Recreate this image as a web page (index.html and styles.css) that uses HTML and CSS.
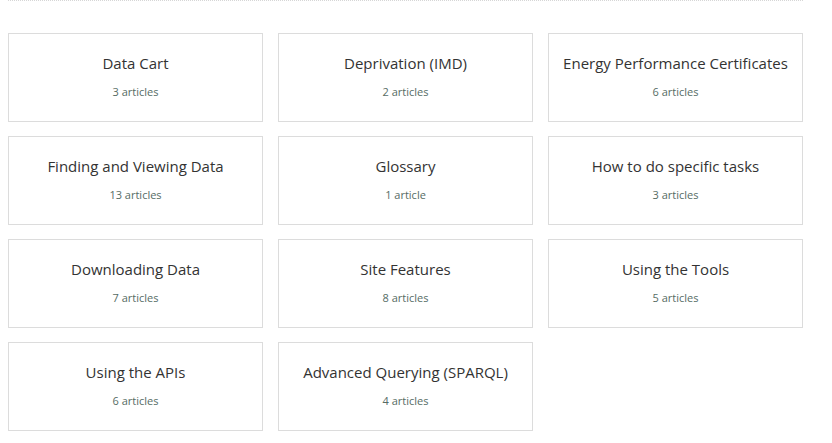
FILE: index.html
```html
<!DOCTYPE html>
<html>
<head>
<meta charset="utf-8">
<link rel="stylesheet" href="styles.css">
</head>
<body>
<div class="page">
  <div class="divider"></div>
  <div class="grid">
    <a class="card" href="#"><span class="title">Data Cart</span><span class="count">3 articles</span></a>
    <a class="card" href="#"><span class="title">Deprivation (IMD)</span><span class="count">2 articles</span></a>
    <a class="card" href="#"><span class="title">Energy Performance Certificates</span><span class="count">6 articles</span></a>
    <a class="card" href="#"><span class="title">Finding and Viewing Data</span><span class="count">13 articles</span></a>
    <a class="card" href="#"><span class="title">Glossary</span><span class="count">1 article</span></a>
    <a class="card" href="#"><span class="title">How to do specific tasks</span><span class="count">3 articles</span></a>
    <a class="card" href="#"><span class="title">Downloading Data</span><span class="count">7 articles</span></a>
    <a class="card" href="#"><span class="title">Site Features</span><span class="count">8 articles</span></a>
    <a class="card" href="#"><span class="title">Using the Tools</span><span class="count">5 articles</span></a>
    <a class="card" href="#"><span class="title">Using the APIs</span><span class="count">6 articles</span></a>
    <a class="card" href="#"><span class="title">Advanced Querying (SPARQL)</span><span class="count">4 articles</span></a>
  </div>
</div>
</body>
</html>
```
FILE: styles.css
```css
html, body {
  margin: 0;
  padding: 0;
  background: #fff;
}
.page {
  padding: 0 0 0 8px;
  font-family: "Open Sans", "Liberation Sans", sans-serif;
}
.divider {
  width: 795px;
  height: 0;
  border-top: 1px dotted #d6d6d6;
  margin-bottom: 32px;
}
.grid {
  display: grid;
  grid-template-columns: repeat(3, 255px);
  column-gap: 15px;
  row-gap: 14px;
}
.card {
  box-sizing: border-box;
  height: 89px;
  border: 1px solid #dcdcdc;
  padding-top: 19px;
  display: flex;
  flex-direction: column;
  align-items: center;
  text-decoration: none;
}
.title {
  font-size: 15px;
  line-height: 21px;
  color: #333;
}
.count {
  margin-top: 10px;
  font-size: 11px;
  line-height: 16px;
  color: #566c65;
}
```
